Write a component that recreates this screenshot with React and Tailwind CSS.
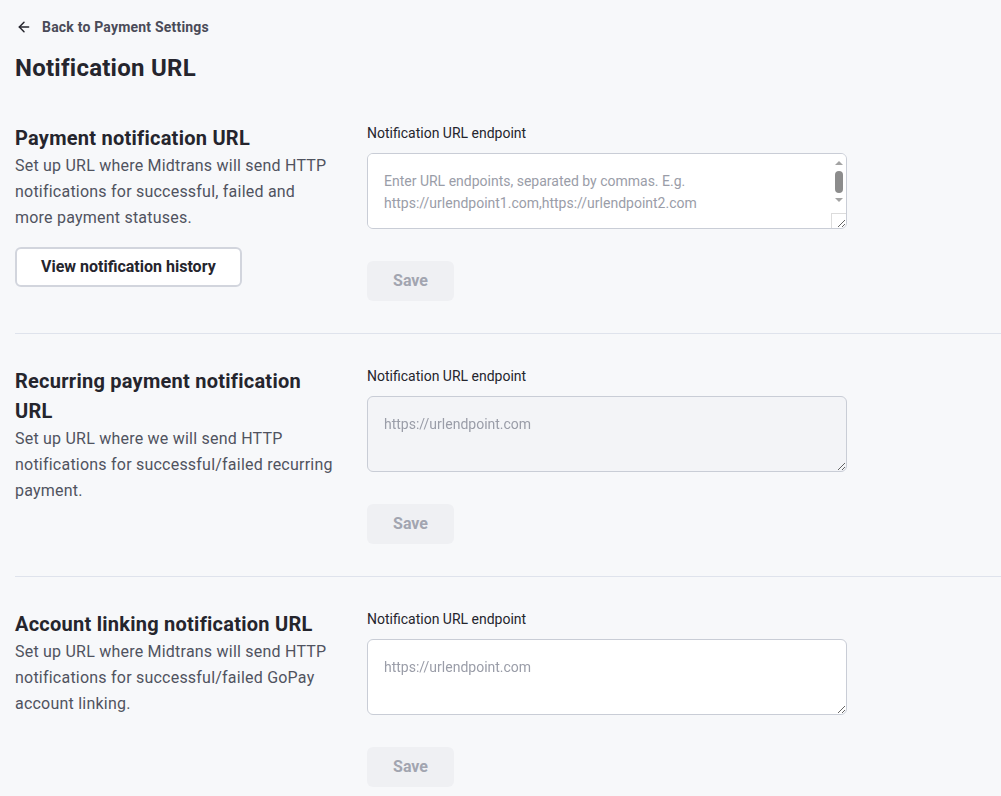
import React from 'react';
import { ArrowLeft } from 'lucide-react';

const sections = [
  {
    title: 'Payment notification URL',
    desc: 'Set up URL where Midtrans will send HTTP notifications for successful, failed and more payment statuses.',
    placeholder: 'Enter URL endpoints, separated by commas. E.g. https://urlendpoint1.com,https://urlendpoint2.com',
    history: true,
    disabled: false,
  },
  {
    title: 'Recurring payment notification URL',
    desc: 'Set up URL where we will send HTTP notifications for successful/failed recurring payment.',
    placeholder: 'https://urlendpoint.com',
    disabled: true,
  },
  {
    title: 'Account linking notification URL',
    desc: 'Set up URL where Midtrans will send HTTP notifications for successful/failed GoPay account linking.',
    placeholder: 'https://urlendpoint.com',
    disabled: false,
  },
];

// fake scrollbar overlay for the first textarea
function Scrollbar() {
  return (
    <div className="absolute top-px right-px bottom-px w-[15px] pointer-events-none flex flex-col items-center">
      <svg width="10" height="8" viewBox="0 0 10 8" className="mt-[5px]">
        <path d="M1 6 L5 2 L9 6 Z" fill="#a3a3a3" />
      </svg>
      <div className="mt-[4px] w-[8px] h-[22px] rounded-full bg-[#8c8c8c]" />
      <svg width="10" height="8" viewBox="0 0 10 8" className="mt-[3px]">
        <path d="M1 2 L5 6 L9 2 Z" fill="#a3a3a3" />
      </svg>
      <div className="mt-auto w-[15px] h-[15px] border-t border-l border-[#dcdcdc] bg-transparent" />
    </div>
  );
}

function Section({ s, last }) {
  return (
    <div className={`flex gap-8 pt-8 pb-8 ${last ? '' : 'border-b border-[#dfe3ec]'}`}>
      <div className="w-[320px] shrink-0">
        <h2 className="text-xl font-bold leading-[30px] tracking-[0.25px] text-[#25252d]">{s.title}</h2>
        <p className="text-base leading-[26px] tracking-[0.22px] text-[#50535f]">{s.desc}</p>
        {s.history && (
          <button className="mt-4 h-10 px-6 rounded-md border-2 border-[#d2d5dd] bg-white text-base font-bold text-[#25252d]">
            View notification history
          </button>
        )}
      </div>
      <div className="w-[480px] shrink-0">
        <label className="block text-sm leading-5 text-[#25252d] mb-[10px]">Notification URL endpoint</label>
        <div className="relative">
          <textarea
            disabled={s.disabled}
            placeholder={s.placeholder}
            className={`block w-full h-[76px] px-4 py-4 text-sm leading-[22px] rounded-md border border-[#c9cdd6] placeholder:text-[#9a9da8] outline-none ${
              s.disabled ? 'bg-[#f3f4f7]' : 'bg-white'
            }`}
          />
          {s.history && <Scrollbar />}
        </div>
        <button className="mt-8 h-10 w-[87px] rounded-md bg-[#eff0f3] text-base font-bold text-[#a2a5b0]">
          Save
        </button>
      </div>
    </div>
  );
}

export default function App() {
  return (
    <div
      className="min-h-screen bg-[#f7f8fa] pl-[15px] overflow-hidden"
      style={{ fontFamily: 'Roboto, "Liberation Sans", sans-serif' }}
    >
      <div className="pt-[17px] flex items-center gap-[10px] text-sm font-bold leading-5 tracking-[0.2px] text-[#4a4b58]">
        <ArrowLeft size={16} strokeWidth={2.2} className="text-[#25252d] ml-[1px]" />
        <span>Back to Payment Settings</span>
      </div>
      <h1 className="mt-[15px] text-2xl font-bold leading-8 tracking-[0.25px] text-[#25252d]">Notification URL</h1>
      <div className="mt-[7px]">
        {sections.map((s, i) => (
          <Section key={s.title} s={s} last={i === sections.length - 1} />
        ))}
      </div>
    </div>
  );
}
